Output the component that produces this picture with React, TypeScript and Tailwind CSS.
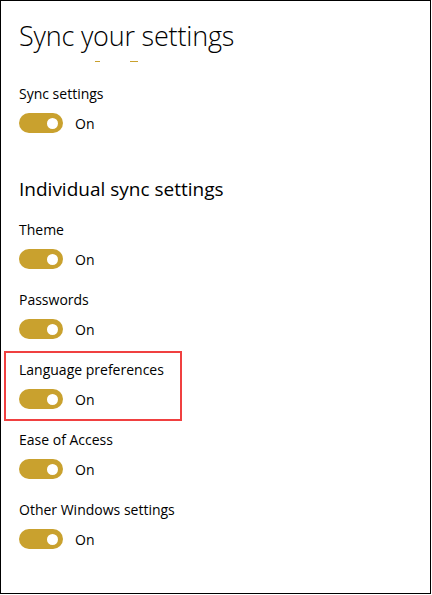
import React from "react";

const gold = "bg-[#c9a12e]";

const Toggle: React.FC = () => {
  return (
    <div className="flex items-center h-[20px]">
      <div className={`w-[44px] h-[20px] rounded-full ${gold} flex items-center justify-end pr-[5px]`}>
        <div className="w-[11px] h-[11px] rounded-full bg-white" />
      </div>
      <span className="ml-[12px] text-[14px] leading-[20px] pt-px">On</span>
    </div>
  );
};

const items = [
  { label: "Theme", hl: false },
  { label: "Passwords", hl: false },
  { label: "Language preferences", hl: true },
  { label: "Ease of Access", hl: false },
  { label: "Other Windows settings", hl: false },
];

export default function App() {
  return (
    <div
      className="w-[431px] h-[594px] border border-black bg-white text-black"
      style={{ fontFamily: '"Open Sans", "Noto Sans", sans-serif' }}
    >
      <div className="pt-[17px]">
        <h1 className="pl-[18px] text-[27px] leading-[36px] font-light tracking-[-0.2px]">Sync your settings</h1>

        {/* clipped link remnants under the title */}
        <div className="h-[29px] pt-[7px] pl-[94px] flex gap-[30px]">
          <span className={`block w-[5px] h-px ${gold}`} />
          <span className={`block w-[8px] h-px ${gold}`} />
        </div>

        <div className="pl-[18px]">
          <p className="pt-px text-[14px] leading-[20px]">Sync settings</p>
          <div className="mt-[9px]">
            <Toggle />
          </div>
          <h2 className="mt-[42px] text-[19px] leading-[28px]">Individual sync settings</h2>
        </div>

        <div className="mt-[8px]">
          {items.map((it) => (
            <div
              key={it.label}
              className={`ml-[3px] w-[178px] border-2 pt-[7px] pb-[10px] pl-[13px] ${
                it.hl ? "border-[#f04040]" : "border-transparent"
              }`}
            >
              <p className="text-[14px] leading-[20px] whitespace-nowrap">{it.label}</p>
              <div className="mt-[9px]">
                <Toggle />
              </div>
            </div>
          ))}
        </div>
      </div>
    </div>
  );
}
